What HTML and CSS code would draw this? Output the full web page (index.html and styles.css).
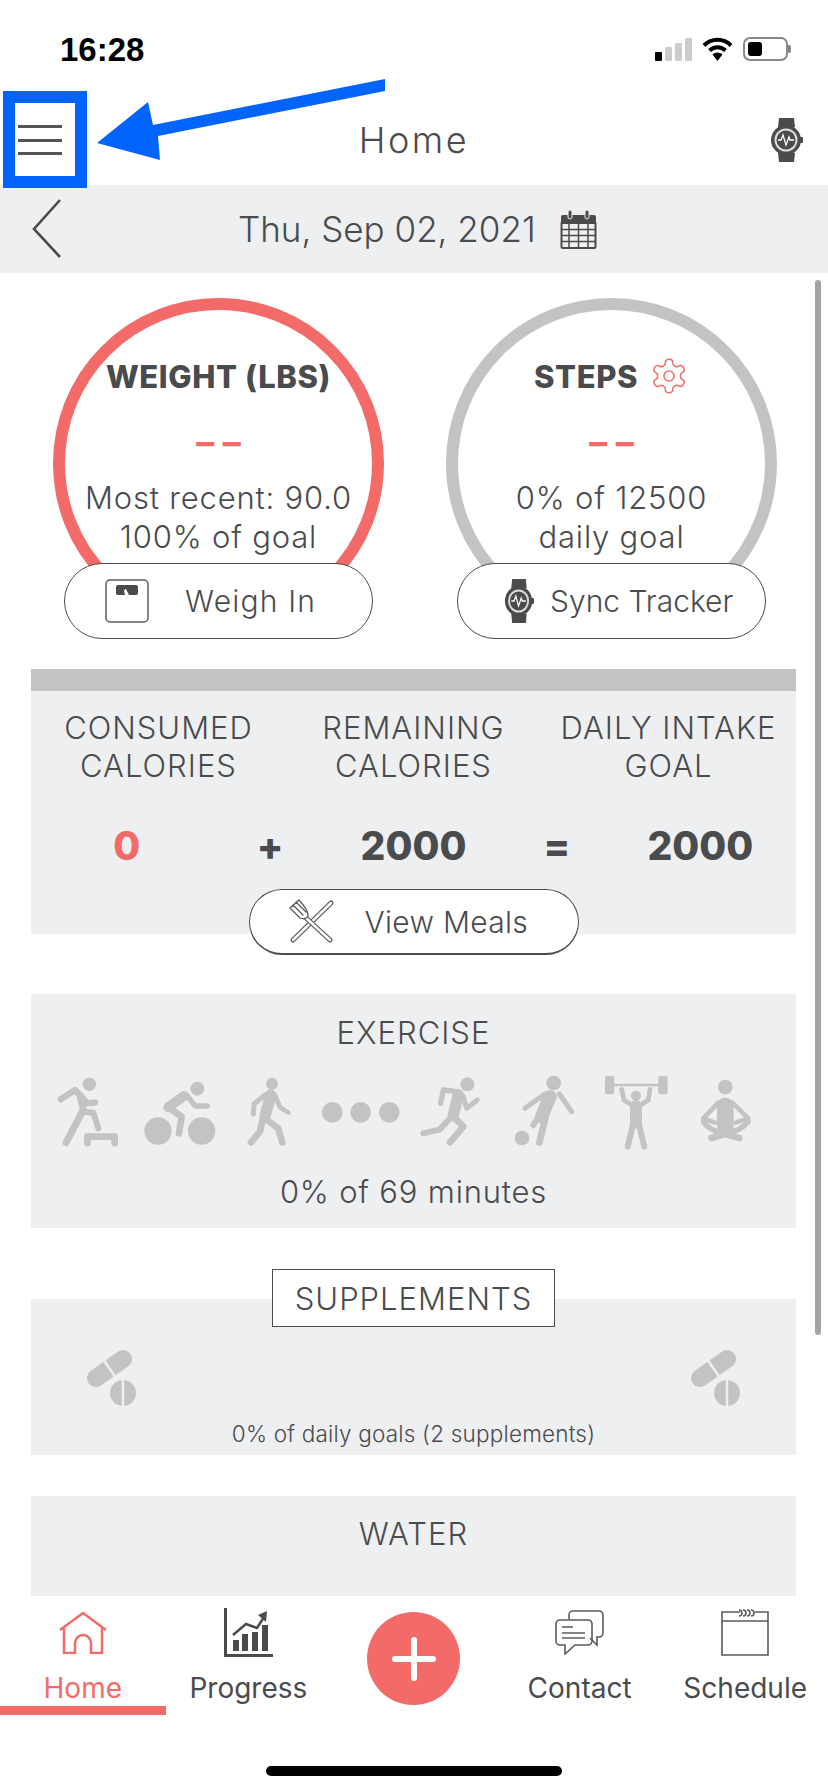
FILE: index.html
```html
<!DOCTYPE html>
<html lang="en">
<head>
  <meta charset="UTF-8" />
  <title>Home</title>
  <link rel="stylesheet" href="styles.css">
</head>
<body>
<svg class="defs" width="0" height="0">
  <symbol id="watch" viewBox="0 0 33 44">
    <path d="M9 0h15l1 9H8zM8 35h17l-1 9H9z" fill="#4a4b4d"/>
    <circle cx="16" cy="22" r="15" fill="#4a4b4d"/>
    <rect x="30" y="19" width="3" height="6" rx="1" fill="#4a4b4d"/>
    <circle cx="16" cy="22" r="11.500" fill="#dcdddf"/>
    <circle cx="16" cy="22" r="9.500" fill="#4a4b4d"/>
    <path d="M8 22h3l2-5 3 10 3-8 1 3h4" fill="none" stroke="#fff" stroke-width="1.300"/>
  </symbol>
  <symbol id="pills" viewBox="0 0 49 56">
    <path d="M9 28 36 9" stroke="#c2c3c5" stroke-width="18" stroke-linecap="round"/>
    <path d="M16 9 29 28" stroke="#eeeff1" stroke-width="2.500"/>
    <circle cx="36" cy="43" r="13" fill="#c2c3c5"/>
    <path d="M36 29v28" stroke="#eeeff1" stroke-width="2.500"/>
  </symbol>
</svg>

<div class="screen">
  <div class="status">
    <span class="time">16:28</span>
    <div class="status-icons">
      <div class="signal"><i class="on s1"></i><i class="s2"></i><i class="s3"></i><i class="s4"></i></div>
      <svg class="wifi" viewBox="0 0 31 24" width="31" height="24">
        <path d="M2 8.500a19 19 0 0 1 27 0M7.500 13.500a11.500 11.500 0 0 1 16 0" fill="none" stroke="#000" stroke-width="4"/>
        <path d="M10.500 17.500a7 7 0 0 1 10 0L15.500 24z" fill="#000"/>
      </svg>
      <div class="battery"><i></i></div>
    </div>
  </div>

  <header class="topbar">
    <div class="burger"><i></i><i></i><i></i></div>
    <h1 class="title">Home</h1>
    <svg class="top-watch" width="33" height="44"><use href="#watch"/></svg>
  </header>

  <!-- annotation drawn on top of the screenshot -->
  <div class="mark-box"></div>
  <svg class="mark-arrow" viewBox="90 70 300 100" width="300" height="100">
    <polygon points="385,79 385,91 158,136 160,160 97,143 148,102 153,125" fill="#0364fb"/>
  </svg>

  <div class="datebar">
    <svg class="back" viewBox="0 0 30 60" width="30" height="60">
      <path d="M28 1 2 30l26 28" fill="none" stroke="#4a4b4d" stroke-width="2.600"/>
    </svg>
    <span class="date">Thu, Sep 02, 2021</span>
    <svg class="cal" viewBox="0 0 37 39" width="37" height="39">
      <path d="M3 5h31a2 2 0 0 1 2 2v7H1V7a2 2 0 0 1 2-2z" fill="#4a4b4d"/>
      <rect x="8" y="0" width="4" height="9" rx="2" fill="#4a4b4d" stroke="#eeeff1"/>
      <rect x="25" y="0" width="4" height="9" rx="2" fill="#4a4b4d" stroke="#eeeff1"/>
      <rect x="1.500" y="12" width="34" height="26" rx="1.500" fill="none" stroke="#4a4b4d" stroke-width="2"/>
      <path d="M9 13v24M18.500 13v24M28 13v24M2 19.500h33M2 25.500h33M2 31.500h33" stroke="#4a4b4d" stroke-width="1.500"/>
    </svg>
  </div>

  <main class="content">
    <div class="scrollbar"></div>

    <section class="gauges">
      <div class="gauge">
        <div class="ring ring-red">
          <h2 class="ring-title">WEIGHT (LBS)</h2>
          <div class="dashes">– –</div>
          <p class="ring-text">Most recent: 90.0<br>100% of goal</p>
        </div>
        <div class="pill pill-scale">
          <svg viewBox="0 0 44 44" width="44" height="44">
            <rect x="1" y="1" width="42" height="42" rx="4" fill="#fff" stroke="#5a5b5d" stroke-width="1.500"/>
            <path d="M13 6h18a2 2 0 0 1 2 2v6a2 2 0 0 1-2 2h-7l-3-6h-1l-1 2 1 4h-7a2 2 0 0 1-2-2V8a2 2 0 0 1 2-2z" fill="#4a4b4d"/>
          </svg>
          <span>Weigh In</span>
        </div>
      </div>
      <div class="gauge">
        <div class="ring ring-grey">
          <h2 class="ring-title">STEPS
            <svg class="gear" viewBox="0 0 24 24" width="40" height="40" fill="none" stroke="#f26b68" stroke-width=".9">
              <path d="M12.220 2h-.44a2 2 0 0 0-2 2v.18a2 2 0 0 1-1 1.730l-.43.25a2 2 0 0 1-2 0l-.15-.08a2 2 0 0 0-2.730.73l-.22.38a2 2 0 0 0 .73 2.730l.15.1a2 2 0 0 1 1 1.720v.51a2 2 0 0 1-1 1.740l-.15.09a2 2 0 0 0-.73 2.730l.22.38a2 2 0 0 0 2.730.73l.15-.08a2 2 0 0 1 2 0l.43.25a2 2 0 0 1 1 1.730V20a2 2 0 0 0 2 2h.44a2 2 0 0 0 2-2v-.18a2 2 0 0 1 1-1.730l.43-.25a2 2 0 0 1 2 0l.15.08a2 2 0 0 0 2.730-.73l.22-.39a2 2 0 0 0-.73-2.730l-.15-.08a2 2 0 0 1-1-1.740v-.5a2 2 0 0 1 1-1.740l.15-.09a2 2 0 0 0 .73-2.730l-.22-.38a2 2 0 0 0-2.730-.73l-.15.08a2 2 0 0 1-2 0l-.43-.25a2 2 0 0 1-1-1.730V4a2 2 0 0 0-2-2z"/>
              <circle cx="12" cy="12" r="3"/>
            </svg>
          </h2>
          <div class="dashes">– –</div>
          <p class="ring-text">0% of 12500<br>daily goal</p>
        </div>
        <div class="pill pill-sync">
          <svg width="30" height="44" viewBox="0 0 33 44" preserveAspectRatio="none"><use href="#watch"/></svg>
          <span>Sync Tracker</span>
        </div>
      </div>
    </section>

    <section class="card calories">
      <div class="strip"></div>
      <div class="cal-labels">
        <div>CONSUMED<br>CALORIES</div>
        <div>REMAINING<br>CALORIES</div>
        <div>DAILY INTAKE<br>GOAL</div>
      </div>
      <div class="cal-nums">
        <span class="red">0</span><span>+</span><span>2000</span><span>=</span><span>2000</span>
      </div>
      <div class="pill pill-meals">
        <svg viewBox="0 0 46 46" width="46" height="46" fill="none" stroke-linecap="round" stroke-linejoin="round">
          <path d="M4 41 42 4" stroke="#5a5b5d" stroke-width="5"/>
          <path d="M4 41 42 4" stroke="#fff" stroke-width="2.500"/>
          <path d="M41 41 16 18" stroke="#5a5b5d" stroke-width="5"/>
          <path d="M41 41 16 18" stroke="#fff" stroke-width="2.500"/>
          <path d="M1 9 11 19Q17 21 19 17 20 12 10 1ZM4 6 14 16M7 3 17 13" stroke="#5a5b5d" stroke-width="1.300" fill="#fff"/>
        </svg>
        <span>View Meals</span>
      </div>
    </section>

    <section class="card exercise">
      <h3 class="card-title">EXERCISE</h3>
      <svg class="activities" viewBox="57 1075 694 75" width="694" height="75" fill="none" stroke="#c2c3c5" stroke-linecap="round" stroke-linejoin="round">
        <g transform="translate(30 1000) scale(.3333)">
          <g fill="#c2c3c5" stroke="none">
            <circle cx="178" cy="253" r="20"/><circle cx="384" cy="393" r="41"/><circle cx="515" cy="393" r="41"/>
            <circle cx="502" cy="266" r="21"/><circle cx="726" cy="251" r="18"/>
            <circle cx="907" cy="337" r="31"/><circle cx="992" cy="337" r="31"/><circle cx="1078" cy="337" r="31"/>
          </g>
          <!-- step -->
          <path d="M92 298 135 270 172 310 195 308" stroke-width="19"/>
          <path d="M150 285 160 330 108 428" stroke-width="21"/>
          <path d="M160 335 190 338 205 385" stroke-width="18"/>
          <path d="M172 430V410H254V430" stroke-width="20"/>
          <!-- cycle -->
          <path d="M462 288 415 322" stroke-width="30"/>
          <path d="M470 285 495 318 532 318" stroke-width="16"/>
          <path d="M415 322 455 350 447 400" stroke-width="20"/>
          <!-- walk -->
          <path d="M722 285 705 350" stroke-width="34"/>
          <path d="M705 285 672 312 670 342" stroke-width="15"/>
          <path d="M735 285 750 322 775 338" stroke-width="14"/>
          <path d="M700 350 690 395 663 427" stroke-width="20"/>
          <path d="M705 355 745 385 757 427" stroke-width="20"/>
        </g>
        <g transform="translate(400 1000) scale(.3333)">
          <g fill="#c2c3c5" stroke="none">
            <circle cx="202" cy="253" r="21"/><circle cx="461" cy="249" r="22"/><circle cx="366" cy="414" r="22"/>
            <circle cx="708" cy="287" r="15"/><circle cx="976" cy="261" r="22"/>
            <rect x="615" y="228" width="28" height="55" rx="6"/><rect x="775" y="228" width="28" height="55" rx="6"/>
          </g>
          <!-- run -->
          <path d="M175 285 160 345" stroke-width="34"/>
          <path d="M175 275 130 270 122 310" stroke-width="16"/>
          <path d="M190 290 200 325 232 300" stroke-width="15"/>
          <path d="M155 350 120 388 70 400" stroke-width="18"/>
          <path d="M160 350 190 380 150 427" stroke-width="20"/>
          <!-- football -->
          <path d="M450 290 425 350" stroke-width="40"/>
          <path d="M435 282 375 325" stroke-width="15"/>
          <path d="M478 282 515 335" stroke-width="15"/>
          <path d="M437 350 418 428" stroke-width="20"/>
          <path d="M420 345 400 375" stroke-width="18"/>
          <!-- weights -->
          <path d="M630 255H790" stroke-width="8"/>
          <path d="M665 268 672 300 695 315" stroke-width="14"/>
          <path d="M750 268 745 300 722 315" stroke-width="14"/>
          <path d="M708 318V368" stroke-width="36"/>
          <path d="M700 370 683 440M716 370 733 440" stroke-width="18"/>
          <!-- yoga -->
          <path d="M976 318V378" stroke-width="50"/>
          <path d="M955 308 910 355 945 368M997 308 1045 355 1007 368" stroke-width="14"/>
          <path d="M910 365Q930 395 976 398Q1022 395 1045 365" stroke-width="16"/>
          <path d="M935 414 1000 395M1018 414 950 395" stroke-width="20"/>
        </g>
      </svg>
      <p class="card-text">0% of 69 minutes</p>
    </section>

    <section class="card supplements">
      <div class="boxed-title">SUPPLEMENTS</div>
      <div class="pill-row">
        <svg width="49" height="56"><use href="#pills"/></svg>
        <svg width="49" height="56"><use href="#pills"/></svg>
      </div>
      <p class="small-text">0% of daily goals (2 supplements)</p>
    </section>

    <section class="card water">
      <h3 class="card-title">WATER</h3>
    </section>
  </main>

  <nav class="nav">
    <a class="nav-item active">
      <div class="nav-icon">
        <svg viewBox="0 0 48 43" width="48" height="43" fill="none" stroke="#f26b68" stroke-width="2.500">
          <path d="M1 19 24 2l23 17M5 16v26h11V32a8 8 0 0 1 16 0v10h11V16"/>
        </svg>
      </div>
      <span>Home</span>
    </a>
    <a class="nav-item">
      <div class="nav-icon">
        <svg viewBox="0 0 49 49" width="49" height="49">
          <path d="M1.500 0v47.500H49" fill="none" stroke="#4a4b4d" stroke-width="3"/>
          <path d="M9 32h6v11H9zM18 26h6v17h-6zM28 24h6v19h-6zM38 17h6v26h-6z" fill="#4a4b4d"/>
          <path d="M9 27 22 16l11 4 7-11" fill="none" stroke="#4a4b4d" stroke-width="2.500"/>
          <path d="M34 7l9-4-1 11z" fill="#4a4b4d"/>
        </svg>
      </div>
      <span>Progress</span>
    </a>
    <a class="nav-add">
      <svg viewBox="0 0 44 44" width="44" height="44">
        <path d="M22 3v38M3 22h38" stroke="#fff" stroke-width="6" stroke-linecap="round"/>
      </svg>
    </a>
    <a class="nav-item">
      <div class="nav-icon">
        <svg viewBox="0 0 49 45" width="49" height="45" fill="none" stroke="#5a5b5d" stroke-width="1.600">
          <path d="M14 9V5a4 4 0 0 1 4-4h26a4 4 0 0 1 4 4v18a4 4 0 0 1-4 4h-2v8l-7-7"/>
          <path d="M5 10h28a4 4 0 0 1 4 4v17a4 4 0 0 1-4 4H20l-10 9v-9H5a4 4 0 0 1-4-4V14a4 4 0 0 1 4-4z"/>
          <path d="M7 17h11M7 23h23M7 28h23"/>
        </svg>
      </div>
      <span>Contact</span>
    </a>
    <a class="nav-item">
      <div class="nav-icon">
        <svg viewBox="0 0 48 47" width="48" height="47" fill="none" stroke="#5a5b5d" stroke-width="1.600">
          <path d="M15 3H1v43h46V3H34M1 12h46"/>
          <path d="M15 3h4M18 1a3 3 0 0 1 0 6M22 1a3 3 0 0 1 0 6M26 1a3 3 0 0 1 0 6M30 1a3 3 0 0 1 0 6"/>
        </svg>
      </div>
      <span>Schedule</span>
    </a>
  </nav>
  <div class="home-bar"></div>
</div>
</body>
</html>
```

FILE: styles.css
```css
* { box-sizing: border-box; }
body {
  margin: 0;
  background: #fff;
  color: #4a4b4d;
  font-family: Inter, "Liberation Sans", sans-serif;
  font-weight: 300;
}
h1, h2, h3, p { margin: 0; font-weight: inherit; }
svg { display: block; }
.defs { position: absolute; }
.screen {
  position: relative;
  width: 828px; height: 1792px;
  overflow: hidden;
}

/* status bar */
.status {
  height: 91px;
  padding: 32px 40px 0 60px;
  display: flex;
  justify-content: space-between;
}
.time {
  font: bold 33px/36px "Liberation Sans", sans-serif;
  color: #000;
}
.status-icons { display: flex; gap: 10px; padding-top: 5px; height: 29px; }
.signal { display: flex; align-items: flex-end; gap: 3px; width: 37px; height: 24px; }
.signal i { width: 7px; background: #ccc; border-radius: 1px; }
.signal .on { background: #000; }
.s1 { height: 9px; } .s2 { height: 14px; } .s3 { height: 18px; } .s4 { height: 23px; }
.battery {
  position: relative;
  width: 45px; height: 24px;
  border: 2px solid #888; border-radius: 7px;
  padding: 3px;
}
.battery::after {
  content: "";
  position: absolute; right: -5px; top: 6px;
  width: 3px; height: 8px;
  background: #888; border-radius: 0 2px 2px 0;
}
.battery i { display: block; width: 14px; height: 14px; background: #000; border-radius: 3px; }

/* top bar */
.topbar {
  height: 94px;
  padding: 4px 18px 0;
  display: grid;
  grid-template-columns: 1fr auto 1fr;
  align-items: center;
}
.title { font-size: 36px; letter-spacing: 2.500px; }
.top-watch { justify-self: end; margin-right: 7px; }
.burger { display: flex; flex-direction: column; gap: 10.500px; width: 44px; }
.burger i { height: 3px; background: #555; }
.mark-box {
  position: absolute; left: 3px; top: 91px;
  width: 84px; height: 97px;
  border: 12px solid #0364fb;
}
.mark-arrow { position: absolute; left: 90px; top: 70px; }

/* date */
.datebar {
  height: 88px;
  background: #eeeff1;
  display: flex;
  align-items: center;
  padding-left: 32px;
}
.date { font-size: 35px; margin-left: 176px; }
.cal { margin-left: 24px; }

.content {
  position: relative;
  height: 1323px;
  overflow: hidden;
  padding: 25px 32px 0 31px;
}
.scrollbar {
  position: absolute; left: 815px; top: 7px;
  width: 6px; height: 1055px;
  background: #a2a3a5; border-radius: 3px;
}

/* gauges */
.gauges { display: flex; gap: 62px; padding-left: 22px; }
.gauge { position: relative; width: 331px; height: 341px; }
.ring {
  width: 331px; height: 331px;
  border: 12px solid;
  border-radius: 50%;
  padding-top: 48px;
  text-align: center;
}
.ring-red { border-color: #f26b68; }
.ring-grey { border-color: #c2c3c5; }
.ring-title {
  display: flex; justify-content: center; align-items: center; gap: 11px;
  height: 36px;
  font-size: 31px; font-weight: 800;
  letter-spacing: .6px;
  white-space: nowrap;
}
.dashes {
  margin-top: 30px;
  font-size: 36px; line-height: 36px; font-weight: 700;
  color: #f26b68;
}
.ring-text { margin-top: 18px; font-size: 31px; line-height: 39px; letter-spacing: .8px; white-space: nowrap; }

.pill {
  display: flex; align-items: center;
  background: #fff;
  border: 1px solid #4a4b4d;
  font-size: 30px;
  white-space: nowrap;
}
.pill-scale, .pill-sync {
  position: absolute; left: 11px; right: 11px; bottom: 0;
  height: 76px;
  border-radius: 38px;
}
.pill-scale { padding-left: 40px; gap: 36px; letter-spacing: 1.200px; }
.pill-sync { padding-left: 46px; gap: 16px; }
.pill-meals {
  width: 330px; height: 66px;
  margin: 19px auto -21px;
  padding-left: 39px; gap: 30px;
  border-radius: 33px;
  border-bottom-width: 2px;
  letter-spacing: .3px;
}

/* cards */
.card { background: #eeeff1; }
.calories { margin-top: 30px; display: flow-root; }
.strip { height: 22px; background: #c2c3c5; }
.cal-labels {
  display: grid; grid-template-columns: repeat(3, 1fr);
  padding-top: 18px;
  font-size: 31px; line-height: 38px; letter-spacing: 1px;
  text-align: center;
}
.cal-nums {
  display: grid; grid-template-columns: repeat(5, 1fr);
  margin: 37px 24px 0;
  font-size: 39px; line-height: 48px; font-weight: 800;
  text-align: center;
}
.red { color: #f26b68; }

.exercise { margin-top: 60px; padding: 21px 0 18px; }
.card-title { font-size: 31px; line-height: 36px; letter-spacing: 1px; text-align: center; }
.activities { margin: 24px 0 0 26px; }
.card-text { margin-top: 24px; font-size: 31px; line-height: 36px; letter-spacing: .8px; text-align: center; }

.supplements { margin-top: 71px; padding-bottom: 7px; }
.boxed-title {
  position: relative; top: -30px;
  width: 283px; height: 58px;
  margin: 0 auto -30px;
  background: #fff;
  border: 1px solid #4a4b4d;
  font-size: 31px; line-height: 58px; letter-spacing: 1px;
  text-align: center;
}
.pill-row { display: flex; justify-content: space-between; padding: 0 56px; margin-top: 23px; }
.small-text { margin-top: 14px; font-size: 22.500px; line-height: 28px; letter-spacing: .2px; text-align: center; }

.water { margin-top: 41px; padding: 20px 0 60px; }

/* bottom nav */
.nav { display: grid; grid-template-columns: repeat(5, 1fr); height: 119px; }
.nav-item {
  display: flex; flex-direction: column; align-items: center;
  padding-top: 11px;
  font-weight: 400; font-size: 28px; line-height: 32px;
}
.nav-icon { height: 50px; display: flex; align-items: center; margin-bottom: 15px; }
.active { color: #f26b68; border-bottom: 9px solid #f26b68; }
.nav-add {
  width: 93px; height: 93px;
  margin: 16px auto 0;
  border-radius: 50%;
  background: #f26b68;
  display: flex; align-items: center; justify-content: center;
}
.home-bar {
  width: 296px; height: 10px;
  margin: 51px auto 0;
  background: #000; border-radius: 5px;
}
```
